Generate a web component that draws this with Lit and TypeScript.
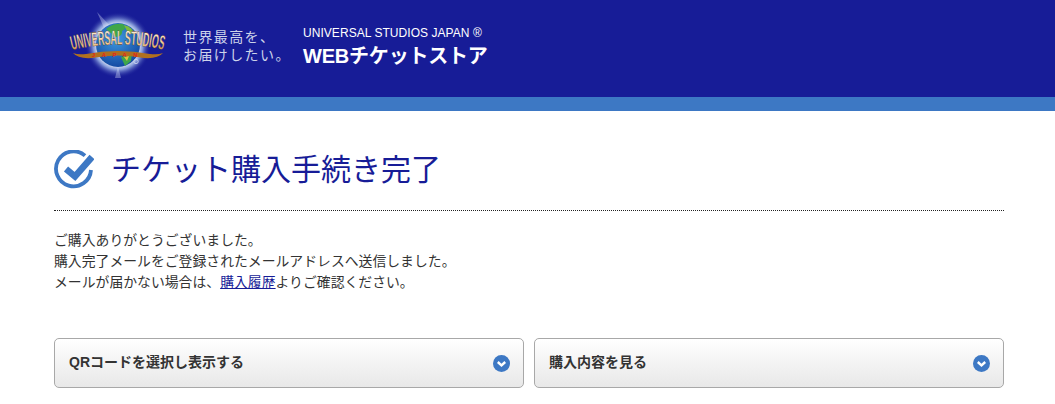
import { LitElement, html, css } from "lit";
import { customElement } from "lit/decorators.js";

@customElement("app-root")
export class AppRoot extends LitElement {
  static styles = css`
    :host { display: block; background: #fff; font-family: "Liberation Sans", "Noto Sans CJK JP", sans-serif; color: #333; height: 404px; overflow: hidden; }
    .header { height: 97px; background: #171c97; display: flex; align-items: flex-start; padding-left: 66px; box-sizing: border-box; }
    .logo { width: 106px; height: 88px; display: block; flex: none; margin-top: 2px; }
    .tagline { margin: 28px 0 0 11px; font-size: 14px; line-height: 18px; letter-spacing: 1.4px; color: #cdd3ea; width: 120px; }
    .store { margin: 26px 0 0 0; color: #fff; }
    .store .en { font-size: 12px; line-height: 14px; letter-spacing: 0.05px; }
    .store .ja { font-size: 20px; line-height: 24px; font-weight: 700; margin-top: 4px; letter-spacing: -0.2px; }
    .band { height: 14px; background: #3d78c4; }
    .main { padding: 0 51px 0 54px; }
    .title { display: flex; align-items: flex-start; gap: 18px; padding-top: 39px; height: 60px; border-bottom: 1px dotted #222; box-sizing: content-box; }
    .title svg { width: 40px; height: 40px; flex: none; }
    .title h1 { margin: 0 0 0 -1px; font-size: 30px; line-height: 40px; font-weight: 400; color: #171c97; }
    .msg { margin: 19px 0 0; font-size: 13.85px; line-height: 21px; color: #333; }
    .msg a { color: #171c97; text-decoration: underline; }
    .buttons { display: flex; gap: 10px; margin-top: 45px; }
    .btn { flex: 1; height: 50px; box-sizing: border-box; border: 1px solid #a8a8a8; border-radius: 5px; background: linear-gradient(#ffffff, #e8e8e8); display: flex; align-items: center; justify-content: space-between; padding: 0 13px 0 14px; font-size: 14px; font-weight: 700; color: #333; }
    .btn span { padding-bottom: 5px; }
    .btn svg { width: 17px; height: 17px; flex: none; }
  `;

  private chevron() {
    return html`<svg viewBox="0 0 17 17"><circle cx="8.5" cy="8.5" r="8.5" fill="#3d78c4"/><path d="M4.8 7 L8.5 10.4 L12.2 7" fill="none" stroke="#fff" stroke-width="2.4"/></svg>`;
  }

  render() {
    return html`
      <div class="header">
        <svg class="logo" viewBox="0 0 106 88" aria-label="Universal Studios Japan">
          <defs>
            <radialGradient id="glow">
              <stop offset="0.6" stop-color="#ffffff" stop-opacity="1"/>
              <stop offset="0.75" stop-color="#a9c4f0" stop-opacity="0.75"/>
              <stop offset="1" stop-color="#171c97" stop-opacity="0"/>
            </radialGradient>
            <radialGradient id="sea" cx="0.45" cy="0.35" r="0.75">
              <stop offset="0" stop-color="#3f9ae0"/>
              <stop offset="1" stop-color="#0e3f9a"/>
            </radialGradient>
            <linearGradient id="gold" x1="0" y1="0" x2="0" y2="1">
              <stop offset="0" stop-color="#fffaf0"/>
              <stop offset="0.65" stop-color="#f2c88e"/>
              <stop offset="1" stop-color="#a9611f"/>
            </linearGradient>
            <path id="arc" d="M6 48 Q52 37 98 48" fill="none"/>
          </defs>
          <circle cx="52" cy="43" r="33" fill="url(#glow)"/>
          <path d="M31 10 L46 26 L39 28 Z M52 64 L49 76 L55 76 Z" fill="#dfe8fb" opacity=".35"/>
          <circle cx="52" cy="43" r="22" fill="url(#sea)"/>
          <path d="M40 27 Q47 21 57 22 Q62 26 56 29 Q57 34 50 35 Q46 32 40 27 Z" fill="#3fa64a"/>
          <path d="M58 23 Q66 25 69 32 L62 31 Z" fill="#7dbb3c"/>
          <path d="M55 55 L66 51 L65 59 L59 64 Z" fill="#3fa64a"/>
          <path d="M58 55 L63 54 L61 59 Z" fill="#e2c13a"/>
          <path d="M7 51 Q12 53 20 52 Q52 46 84 52 Q92 53 97 51 Q92 57 78 56 Q52 51 26 56 Q12 57 7 51 Z" fill="#b0701f"/>
          <text font-family="Liberation Sans, sans-serif" font-size="20" font-weight="700" fill="url(#gold)" stroke="#4a2810" stroke-width="0.35">
            <textPath href="#arc" textLength="92" lengthAdjust="spacingAndGlyphs">UNIVERSAL STUDIOS</textPath>
          </text>
          <text x="52" y="55" text-anchor="middle" font-family="Liberation Sans, sans-serif" font-size="6" font-weight="700" letter-spacing="6.5" fill="#e3231b">JAPAN</text>
          <circle cx="70" cy="59.5" r="2.2" fill="none" stroke="#cfd8ee" stroke-width="0.8"/>
        </svg>
        <div class="tagline">世界最高を、<br />お届けしたい。</div>
        <div class="store">
          <div class="en">UNIVERSAL STUDIOS JAPAN ®</div>
          <div class="ja">WEBチケットストア</div>
        </div>
      </div>
      <div class="band"></div>
      <div class="main">
        <div class="title">
          <svg viewBox="0 0 40 40">
            <path d="M31 5.6 A17.5 17.5 0 1 0 37 20" fill="none" stroke="#3d78c4" stroke-width="3.8"/>
            <path d="M12 19 L21 26.5 L38 7" fill="none" stroke="#3d78c4" stroke-width="6.5"/>
          </svg>
          <h1>チケット購入手続き完了</h1>
        </div>
        <div class="msg">
          ご購入ありがとうございました。<br />
          購入完了メールをご登録されたメールアドレスへ送信しました。<br />
          メールが届かない場合は、<a href="#">購入履歴</a>よりご確認ください。
        </div>
        <div class="buttons">
          <div class="btn"><span>QRコードを選択し表示する</span>${this.chevron()}</div>
          <div class="btn"><span>購入内容を見る</span>${this.chevron()}</div>
        </div>
      </div>
    `;
  }
}
